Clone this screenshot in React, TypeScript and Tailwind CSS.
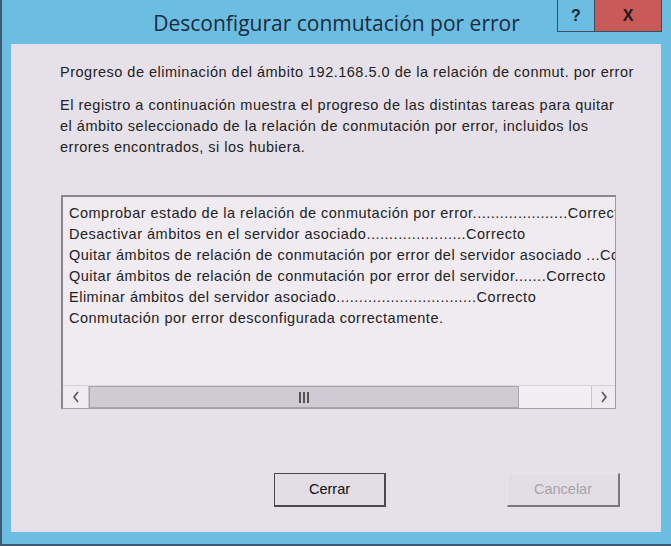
import React from "react";

const rows = [
  "Comprobar estado de la relación de conmutación por error.....................Correcto",
  "Desactivar ámbitos en el servidor asociado......................Correcto",
  "Quitar ámbitos de relación de conmutación por error del servidor asociado ...Correcto",
  "Quitar ámbitos de relación de conmutación por error del servidor.......Correcto",
  "Eliminar ámbitos del servidor asociado...............................Correcto",
  "Conmutación por error desconfigurada correctamente.",
];

export default function App() {
  return (
    <div className="w-[671px] h-[546px] bg-[#6cbde2] border-l-2 border-b-2 border-[#3f5a70] flex flex-col overflow-hidden" style={{ fontFamily: "'Liberation Sans', Arial, sans-serif" }}>
      <div className="h-[44px] flex items-start relative shrink-0">
        <div className="absolute left-0 right-0 top-[8px] text-center text-[21px] text-[#1b2b3c]" style={{ fontFamily: "'Open Sans', 'Noto Sans', sans-serif" }}>
          Desconfigurar conmutación por error
        </div>
        <div className="ml-auto mr-[9px] flex h-[32px] relative">
          <div className="w-[38px] h-[32px] border border-[#3b4d5e] border-t-0 flex items-center justify-center text-[16px] font-bold text-[#1b2433]">?</div>
          <div className="w-[67px] h-[32px] bg-[#c85a58] border-b border-r border-[#3b4d5e] flex items-center justify-center text-[16px] font-bold text-[#1b1b1b]">X</div>
        </div>
      </div>
      <div className="ml-[9px] mr-[10px] h-[488px] bg-[#e6e0e8] flex flex-col text-[14.5px] tracking-[0.5px] text-[#222]">
        <div className="pl-[49px] pt-[18px] leading-[21px] whitespace-nowrap">
          Progreso de eliminación del ámbito 192.168.5.0 de la relación de conmut. por error
        </div>
        <div className="pl-[49px] pt-[12px] leading-[21px] whitespace-nowrap">
          El registro a continuación muestra el progreso de las distintas tareas para quitar
          <br />
          el ámbito seleccionado de la relación de conmutación por error, incluidos los
          <br />
          errores encontrados, si los hubiera.
        </div>
        <div className="ml-[50px] mt-[37px] w-[555px] h-[214px] border border-[#a09ca4] border-l-2 border-t-2 border-l-[#8a868e] border-t-[#8a868e] bg-[#efebf1] flex flex-col">
          <div className="flex-1 overflow-hidden pl-[6px] pt-[6px] leading-[21px] whitespace-nowrap">
            {rows.map((r) => (
              <div key={r}>{r}</div>
            ))}
          </div>
          <div className="h-[23px] flex border-t border-[#d6d2d8]">
            <div className="w-[26px] flex items-center justify-center bg-[#efebf1] border-r border-[#c8c4ca]">
              <svg width="8" height="12" viewBox="0 0 8 12"><path d="M6 1 L2 6 L6 11" stroke="#555" strokeWidth="1.6" fill="none" /></svg>
            </div>
            <div className="w-[430px] bg-[#d0cbd3] border border-[#aaa6ad] flex items-center justify-center">
              <svg width="10" height="11" viewBox="0 0 10 11"><rect x="0" y="0" width="2" height="11" fill="#555" /><rect x="4" y="0" width="2" height="11" fill="#555" /><rect x="8" y="0" width="2" height="11" fill="#555" /></svg>
            </div>
            <div className="flex-1 bg-[#f2eff4]" />
            <div className="w-[24px] flex items-center justify-center bg-[#efebf1] border-l border-[#c8c4ca]">
              <svg width="8" height="12" viewBox="0 0 8 12"><path d="M2 1 L6 6 L2 11" stroke="#555" strokeWidth="1.6" fill="none" /></svg>
            </div>
          </div>
        </div>
        <div className="flex mt-[64px] tracking-normal">
          <div className="ml-[263px] w-[112px] h-[34px] border border-[#4a4a4a] border-r-2 border-b-2 bg-[#e3dee5] flex items-center justify-center text-[#111]">
            Cerrar
          </div>
          <div className="ml-[121px] w-[113px] h-[34px] border border-[#e8e4ea] border-r-2 border-b-2 border-r-[#7a777d] border-b-[#7a777d] bg-[#e3dee5] flex items-center justify-center text-[#a7a3aa]">
            Cancelar
          </div>
        </div>
      </div>
    </div>
  );
}
